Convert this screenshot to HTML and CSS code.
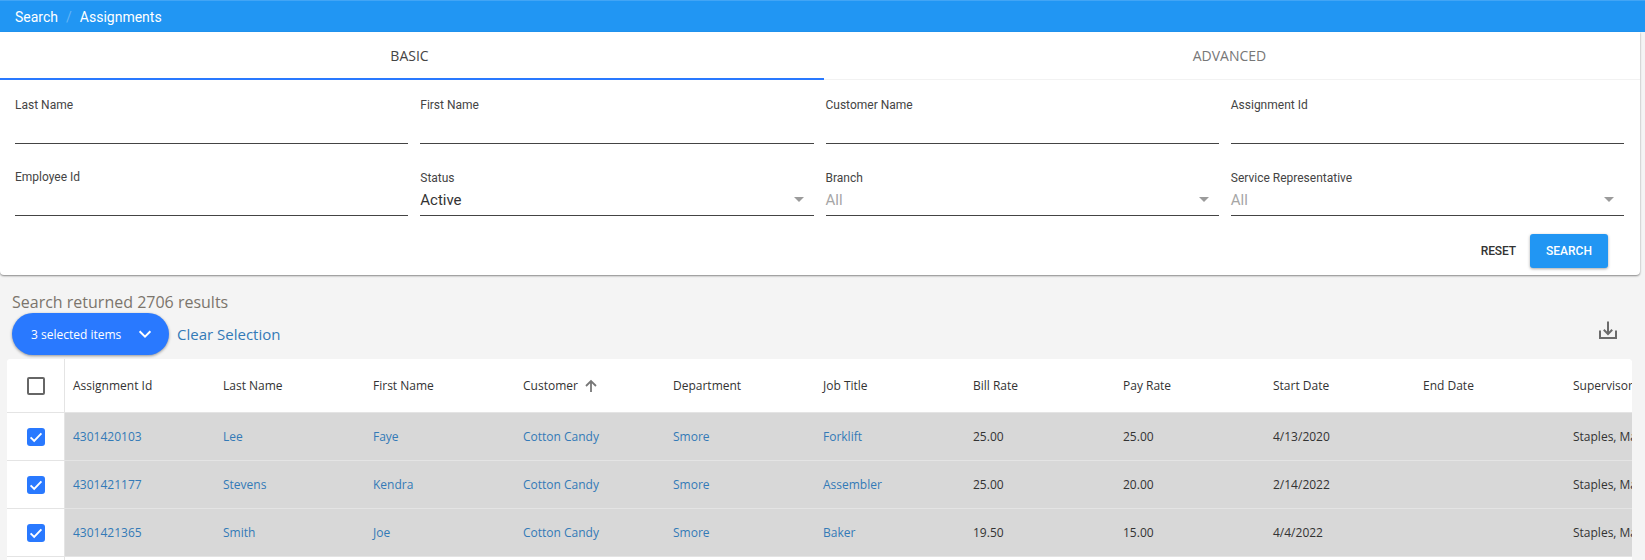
FILE: index.html
```html
<!DOCTYPE html>
<html lang="en">
<head>
<meta charset="utf-8">
<title>Assignments</title>
<link rel="stylesheet" href="styles.css">
</head>
<body>
<header class="crumbs"><span>Search</span><span class="sep">/</span><span>Assignments</span></header>
<section class="card">
  <div class="tabs">
    <div class="tab active">BASIC</div>
    <div class="tab">ADVANCED</div>
  </div>
  <form class="form">
    <div class="field"><label>Last Name</label></div>
    <div class="field"><label>First Name</label></div>
    <div class="field"><label>Customer Name</label></div>
    <div class="field"><label>Assignment Id</label></div>
    <div class="field"><label>Employee Id</label></div>
    <div class="field select"><label>Status</label><div class="value">Active</div><i class="caret"></i></div>
    <div class="field select"><label>Branch</label><div class="value muted">All</div><i class="caret"></i></div>
    <div class="field select"><label>Service Representative</label><div class="value muted">All</div><i class="caret"></i></div>
  </form>
  <div class="actions">
    <button class="btn-text" type="button">RESET</button>
    <button class="btn-primary" type="button">SEARCH</button>
  </div>
</section>
<p class="results">Search returned 2706 results</p>
<div class="toolbar">
  <button class="pill" type="button"><span>3 selected items</span>
    <svg width="16" height="16" viewBox="0 0 16 16"><path d="M2.6 5.2 8 10.6l5.4-5.4" fill="none" stroke="#fff" stroke-width="2"/></svg>
  </button>
  <a class="clear">Clear Selection</a>
  <svg class="download" width="22" height="22" viewBox="0 0 22 22"><path d="M11 2.5v12.5M6.8 10.8 11 15l4.2-4.2M3 11.5V19h16v-7.5" fill="none" stroke="#6b6b6b" stroke-width="2"/></svg>
</div>
<section class="table">
  <div class="row head">
    <div class="check"><i class="box"></i></div>
    <div class="cell">Assignment Id</div><div class="cell">Last Name</div><div class="cell">First Name</div>
    <div class="cell">Customer <svg class="sort" width="16" height="16" viewBox="0 0 16 16"><path d="M8 14V3M3 8l5-5 5 5" fill="none" stroke="#777" stroke-width="1.8"/></svg></div>
    <div class="cell">Department</div><div class="cell">Job Title</div><div class="cell">Bill Rate</div><div class="cell">Pay Rate</div><div class="cell">Start Date</div><div class="cell">End Date</div><div class="cell">Supervisor</div>
  </div>
  <div class="row sel">
    <div class="check"><i class="box on"><svg width="18" height="18" viewBox="0 0 18 18"><path d="M3.6 9.4 7.2 13l7.2-7.6" fill="none" stroke="#fff" stroke-width="1.9"/></svg></i></div>
    <div class="cell link">4301420103</div><div class="cell link">Lee</div><div class="cell link">Faye</div><div class="cell link">Cotton Candy</div><div class="cell link">Smore</div><div class="cell link">Forklift</div><div class="cell">25.00</div><div class="cell">25.00</div><div class="cell">4/13/2020</div><div class="cell"></div><div class="cell">Staples, Mark</div>
  </div>
  <div class="row sel">
    <div class="check"><i class="box on"><svg width="18" height="18" viewBox="0 0 18 18"><path d="M3.6 9.4 7.2 13l7.2-7.6" fill="none" stroke="#fff" stroke-width="1.9"/></svg></i></div>
    <div class="cell link">4301421177</div><div class="cell link">Stevens</div><div class="cell link">Kendra</div><div class="cell link">Cotton Candy</div><div class="cell link">Smore</div><div class="cell link">Assembler</div><div class="cell">25.00</div><div class="cell">20.00</div><div class="cell">2/14/2022</div><div class="cell"></div><div class="cell">Staples, Mark</div>
  </div>
  <div class="row sel">
    <div class="check"><i class="box on"><svg width="18" height="18" viewBox="0 0 18 18"><path d="M3.6 9.4 7.2 13l7.2-7.6" fill="none" stroke="#fff" stroke-width="1.9"/></svg></i></div>
    <div class="cell link">4301421365</div><div class="cell link">Smith</div><div class="cell link">Joe</div><div class="cell link">Cotton Candy</div><div class="cell link">Smore</div><div class="cell link">Baker</div><div class="cell">19.50</div><div class="cell">15.00</div><div class="cell">4/4/2022</div><div class="cell"></div><div class="cell">Staples, Mark</div>
  </div>
  <div class="row"><div class="check"></div></div>
</section>
</body>
</html>
```
FILE: styles.css
```css
* { box-sizing: border-box; }
html, body { margin: 0; height: 560px; overflow: hidden; }
body { background: #f4f4f4; font-family: Roboto, sans-serif; color: #333; }
.crumbs { height: 32px; background: #2196f3; border-top: 1px solid #42a5f5; color: #fff; font-size: 14px; display: flex; align-items: center; padding-left: 15px; }
.sep { color: #64b5f6; margin: 0 8px; }
.card { width: 1640px; height: 243px; background: #fff; border-radius: 0 0 4px 4px; box-shadow: 0 1px 2px rgba(0,0,0,.45); }
.tabs { display: flex; height: 48px; }
.tab { flex: 0 0 824px; height: 48px; padding-right: 5px; font: 14px/48px "Open Sans", sans-serif; color: #777; text-align: center; border-bottom: 1px solid #f2f2f2; }
.tab + .tab { flex: 1; }
.tab.active { color: #444; border-bottom: 2px solid #2979ff; }
.form { display: grid; grid-template-columns: repeat(4, 1fr); column-gap: 12px; padding: 0 16px 0 15px; }
.field { position: relative; height: 72px; padding-top: 26px; border-bottom: 1px solid #444; font-size: 12px; color: #444; }
.field:nth-child(-n+4) { height: 64px; padding-top: 18px; }
.field label { display: block; line-height: 15px; }
.field.select { padding-top: 27px; }
.value { font-size: 15px; line-height: 20px; color: #333; margin-top: 4px; }
.value.muted { color: #a6a6a6; }
.caret { position: absolute; right: 10px; bottom: 13px; width: 0; height: 0; border: 5px solid transparent; border-top-color: #9b9b9b; border-bottom: 0; }
.actions { display: flex; justify-content: flex-end; align-items: center; gap: 14px; padding: 18px 32px 0 0; }
.btn-text { border: 0; background: none; font: 500 12px Roboto, sans-serif; letter-spacing: -.1px; color: #333; padding: 0; }
.btn-primary { width: 78px; height: 34px; border: 0; border-radius: 3px; background: #2196f3; color: #fff; font: 500 12px Roboto, sans-serif; box-shadow: 0 1px 3px rgba(0,0,0,.35); }
.results { margin: 17px 0 0 12px; font: 16px/20px "Open Sans", sans-serif; color: #7b746c; }
.toolbar { display: flex; align-items: center; height: 42px; margin: 1px 0 0 12px; padding-right: 26px; }
.pill { width: 157px; height: 42px; border: 0; border-radius: 21px; background: #2979ff; color: #fff; font: 12px "Open Sans", sans-serif; display: flex; align-items: center; justify-content: space-between; padding: 0 16px 0 19px; box-shadow: 0 1px 3px rgba(0,0,0,.4); }
.clear { margin-left: 8px; font: 15px "Open Sans", sans-serif; color: #337ab7; }
.download { margin-left: auto; align-self: flex-start; margin-top: 6px; }
.table { width: 1625px; height: 201px; margin: 4px 0 0 7px; background: #fff; border-radius: 4px 4px 0 0; overflow: hidden; font: 12px "Open Sans", sans-serif; color: #333; }
.row { display: flex; height: 48px; background: #fff; border-bottom: 1px solid #e4e4e4; }
.row.head { height: 54px; }
.check { flex: 0 0 58px; display: flex; align-items: center; justify-content: center; padding-top: 1px; border-right: 1px solid #e4e4e4; background: #fff; }
.cell { flex: 0 0 150px; padding-left: 8px; display: flex; align-items: center; white-space: nowrap; overflow: hidden; }
.sel { background: #d8d8d8; }
.link { color: #337ab7; }
.sort { margin-left: 5px; }
.box { display: block; width: 18px; height: 18px; border: 2px solid #666; border-radius: 2px; }
.box.on { border: 0; border-radius: 3px; background: #2979ff; }
.box svg { display: block; }
```
